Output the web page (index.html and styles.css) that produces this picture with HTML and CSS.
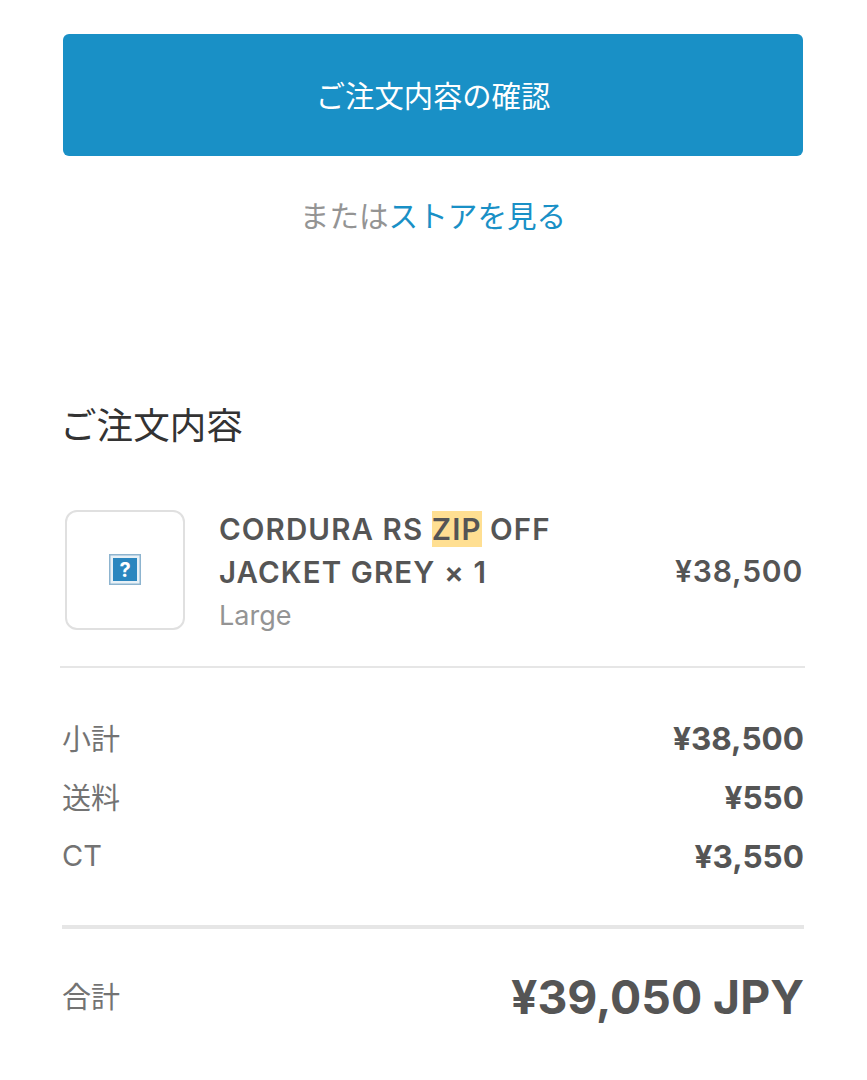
FILE: index.html
```html
<!DOCTYPE html>
<html lang="ja">
  <head>
    <meta charset="UTF-8" />
    <meta name="viewport" content="width=device-width, initial-scale=1.0" />
    <link rel="stylesheet" href="styles.css">
  </head>
  <body>
    <div class="container">
      <a class="confirm" href="#">ご注文内容の確認</a>
      <p class="store-link">または<a href="#">ストアを見る</a></p>

      <h2 class="summary-title">ご注文内容</h2>

      <div class="item">
        <div class="thumb">
          <svg class="thumb-icon" viewBox="0 0 32 31" xmlns="http://www.w3.org/2000/svg">
            <rect x="0.75" y="0.75" width="30.5" height="29.5" fill="#e8f1f7" stroke="#8db4cf" stroke-width="1.5" />
            <rect x="4" y="4" width="24" height="23" fill="#2a86bf" />
          </svg>
          <span class="thumb-mark">?</span>
        </div>
        <div class="item-info">
          <div class="item-name">CORDURA RS <mark>ZIP</mark> OFF<br />JACKET GREY × 1</div>
          <div class="item-variant">Large</div>
        </div>
        <div class="item-price">¥38,500</div>
      </div>

      <div class="costs">
        <div class="cost-row"><span>小計</span><strong>¥38,500</strong></div>
        <div class="cost-row"><span>送料</span><strong>¥550</strong></div>
        <div class="cost-row"><span>CT</span><strong>¥3,550</strong></div>
      </div>

      <div class="total">
        <span>合計</span>
        <strong>¥39,050 JPY</strong>
      </div>
    </div>
  </body>
</html>
```

FILE: styles.css
```css
html,
body {
  width: 100%;
  height: 100%;
}

body {
  margin: 0;
  background-color: white;
  font-family: Inter, "Noto Sans CJK JP", sans-serif;
  color: #555;
}

.container {
  padding: 34px 63px 0 62px;
}

/* Top button */

.confirm {
  display: block;
  margin: 0 1px;
  height: 122px;
  line-height: 126px;
  background-color: #1990c6;
  border-radius: 6px;
  color: white;
  text-align: center;
  font-size: 29.3px;
  text-decoration: none;
}

.store-link {
  margin: 39px 0 0 0;
  text-align: center;
  font-size: 29.6px;
  line-height: 42px;
  color: #949494;
}

.store-link a {
  color: #1990c6;
  text-decoration: none;
}

.summary-title {
  margin: 167px 0 0 -2px;
  font-size: 36.6px;
  line-height: 44px;
  font-weight: 400;
  color: #333;
}

/* Line item */

.item {
  display: flex;
  align-items: center;
  margin: 60px -1px 0 -2px;
  padding: 0 2px 29px 5px;
  border-bottom: 2px solid #e6e6e6;
}

.thumb {
  position: relative;
  display: flex;
  align-items: center;
  justify-content: center;
  flex: none;
  width: 120px;
  height: 120px;
  margin-bottom: 6px;
  border: 2px solid #e0e0e0;
  border-radius: 12px;
  box-sizing: border-box;
}

.thumb-icon {
  width: 32px;
  height: 31px;
}

.thumb-mark {
  position: absolute;
  top: 50%;
  left: 50%;
  transform: translate(-50%, -50%);
  color: white;
  font-size: 20px;
  font-weight: 700;
}

.item-info {
  flex: 1;
  margin-left: 34px;
}

.item-name {
  font-size: 29.5px;
  line-height: 43px;
  font-weight: 600;
  letter-spacing: 1.1px;
  color: #555;
}

.item-name mark {
  background-color: #ffdf92;
  color: inherit;
}

.item-variant {
  font-size: 27px;
  line-height: 43px;
  color: #949494;
}

.item-price {
  margin-bottom: 4px;
  font-size: 30px;
  font-weight: 600;
  letter-spacing: 0.8px;
}

/* Cost rows */

.costs {
  padding: 41px 0 39px 0;
  border-bottom: 4px solid #e6e6e6;
}

.cost-row {
  display: flex;
  align-items: center;
  justify-content: space-between;
  height: 59px;
  font-size: 29px;
  color: #737373;
}

.cost-row span {
  margin-bottom: 3px;
}

.cost-row strong {
  font-size: 31.5px;
  font-weight: 700;
  color: #555;
}

.total {
  display: flex;
  align-items: center;
  justify-content: space-between;
  margin-top: 40px;
  font-size: 29px;
  color: #737373;
}

.total span {
  margin-bottom: 4px;
}

.total strong {
  font-size: 46.3px;
  font-weight: 700;
  color: #555;
}
```
